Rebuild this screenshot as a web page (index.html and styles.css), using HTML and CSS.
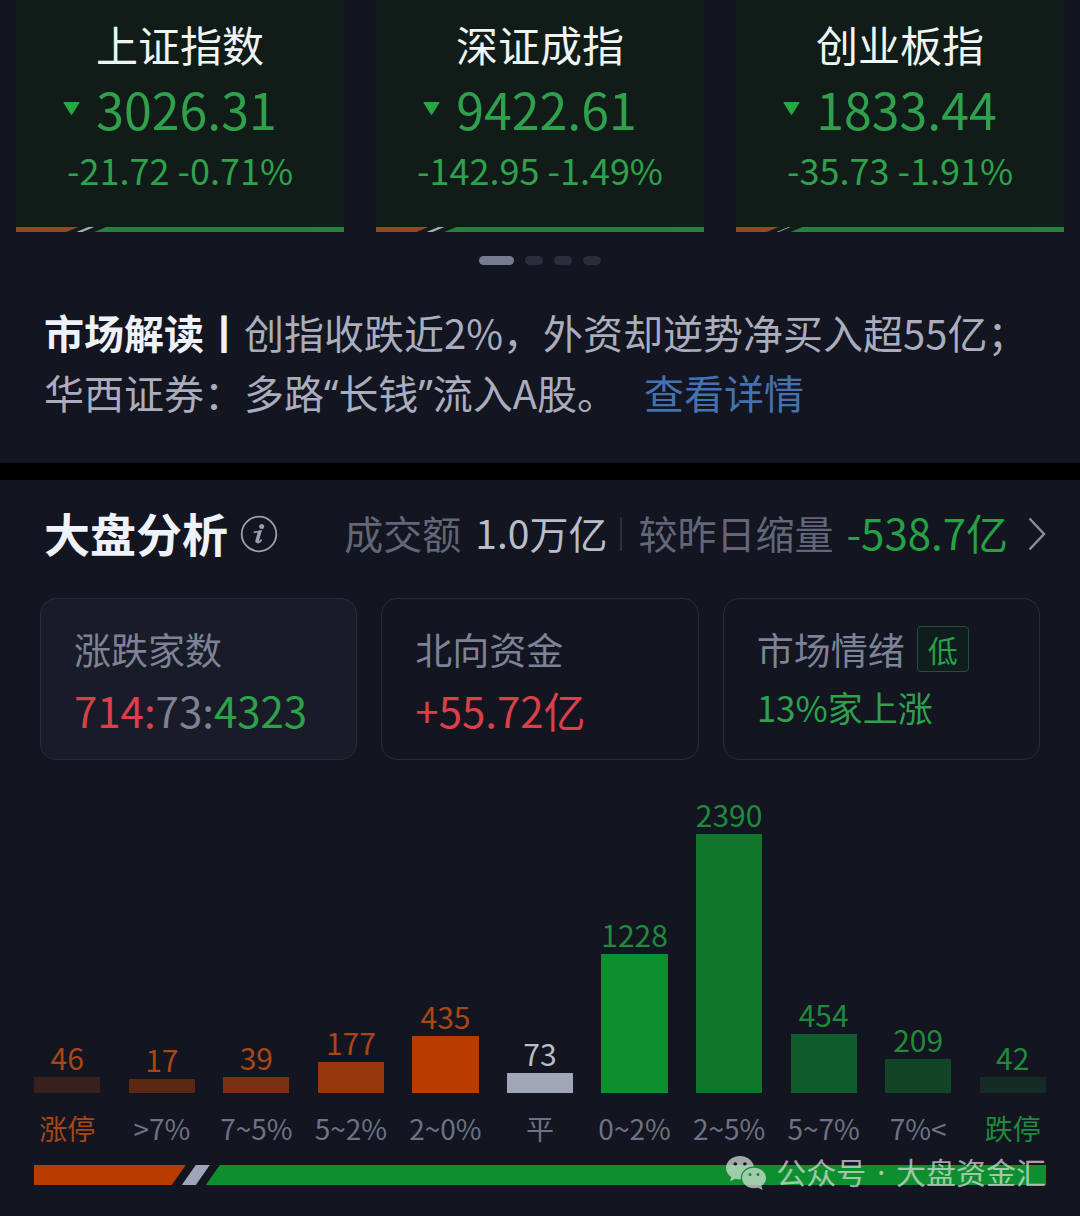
FILE: index.html
```html
<!DOCTYPE html>
<html lang="zh-CN">
<head>
<meta charset="utf-8">
<meta name="viewport" content="width=device-width, initial-scale=1">
<title>大盘分析</title>
<link rel="stylesheet" href="styles.css">
</head>
<body>
<main class="page">
  <section class="overview">
    <div class="indices">
      <article class="index">
        <h2 class="index-name">上证指数</h2>
        <p class="index-value"><svg class="down" viewBox="0 0 17 13" aria-hidden="true"><path d="M1 0h15q1 0 .4 1L9.500 12q-1 1.500-2 0L.6 1Q0 0 1 0z"/></svg>3026.31</p>
        <p class="index-delta">-21.72 -0.71%</p>
        <div class="split split-thin"><span class="seg up" style="width:19%"></span><span class="seg flat"></span><span class="seg fall"></span></div>
      </article>
      <article class="index">
        <h2 class="index-name">深证成指</h2>
        <p class="index-value"><svg class="down" viewBox="0 0 17 13" aria-hidden="true"><path d="M1 0h15q1 0 .4 1L9.500 12q-1 1.500-2 0L.6 1Q0 0 1 0z"/></svg>9422.61</p>
        <p class="index-delta">-142.95 -1.49%</p>
        <div class="split split-thin"><span class="seg up" style="width:16%"></span><span class="seg flat"></span><span class="seg fall"></span></div>
      </article>
      <article class="index">
        <h2 class="index-name">创业板指</h2>
        <p class="index-value"><svg class="down" viewBox="0 0 17 13" aria-hidden="true"><path d="M1 0h15q1 0 .4 1L9.500 12q-1 1.500-2 0L.6 1Q0 0 1 0z"/></svg>1833.44</p>
        <p class="index-delta">-35.73 -1.91%</p>
        <div class="split split-thin"><span class="seg up" style="width:13%"></span><span class="seg flat hairline"></span><span class="seg fall"></span></div>
      </article>
    </div>
    <div class="pager">
      <button class="dot dot-on" type="button" aria-label="第1页"></button>
      <button class="dot" type="button" aria-label="第2页"></button>
      <button class="dot" type="button" aria-label="第3页"></button>
      <button class="dot" type="button" aria-label="第4页"></button>
    </div>
    <p class="news"><strong>市场解读丨</strong>创指收跌近2%，外资却逆势净买入超55亿；华西证券：多路<span class="quote">“</span>长钱<span class="quote">”</span>流入A股。<a class="more" href="#detail">查看详情</a></p>
  </section>

  <section class="analysis" id="detail">
    <header class="head">
      <h1 class="title">大盘分析</h1>
      <button class="info" type="button" aria-label="说明">
        <svg viewBox="0 0 38 38" aria-hidden="true"><circle cx="19" cy="19" r="17.300" fill="none" stroke="currentColor" stroke-width="1.800"/><circle cx="21.700" cy="11.400" r="2.500" fill="currentColor"/><path d="M14.500 17.200q3.500-.4 6.300-1.200l-2.900 10.200q-.4 1.600.6 1.300 1.200-.4 2.600-2.200" fill="none" stroke="currentColor" stroke-width="1.800" stroke-linecap="round"/><path d="M19.300 17l-2.700 9.500" stroke="currentColor" stroke-width="2.800" stroke-linecap="round"/></svg>
      </button>
      <a class="turnover" href="#turnover">
        <span class="muted">成交额</span>
        <span class="amount">1.0万亿</span>
        <span class="rule"></span>
        <span class="muted">较昨日缩量</span>
        <span class="shrink">-538.7亿</span>
        <svg class="chevron" viewBox="0 0 18 34" aria-hidden="true"><path d="M1.500 1.500L16 17 1.500 32.500" fill="none" stroke="currentColor" stroke-width="2.400"/></svg>
      </a>
    </header>

    <div class="tiles">
      <button class="tile tile-on" type="button">
        <span class="tile-label">涨跌家数</span>
        <span class="tile-value"><span class="red">714:</span><span class="gray">73:</span><span class="green">4323</span></span>
      </button>
      <button class="tile" type="button">
        <span class="tile-label">北向资金</span>
        <span class="tile-value red">+55.72亿</span>
      </button>
      <button class="tile" type="button">
        <span class="tile-label">市场情绪<span class="tag">低</span></span>
        <span class="tile-value tile-text green">13%家上涨</span>
      </button>
    </div>

    <div class="chart">
      <div class="col c-up"><span class="num">46</span><span class="bar u5" style="height:16px"></span><span class="cat">涨停</span></div>
      <div class="col c-up plain"><span class="num">17</span><span class="bar u4" style="height:14px"></span><span class="cat">&gt;7%</span></div>
      <div class="col c-up plain"><span class="num">39</span><span class="bar u3" style="height:16px"></span><span class="cat">7~5%</span></div>
      <div class="col c-up plain"><span class="num">177</span><span class="bar u2" style="height:31px"></span><span class="cat">5~2%</span></div>
      <div class="col c-up plain"><span class="num">435</span><span class="bar u1" style="height:57px"></span><span class="cat">2~0%</span></div>
      <div class="col c-flat plain"><span class="num">73</span><span class="bar f" style="height:20px"></span><span class="cat">平</span></div>
      <div class="col c-down plain"><span class="num">1228</span><span class="bar d1" style="height:139px"></span><span class="cat">0~2%</span></div>
      <div class="col c-down plain"><span class="num">2390</span><span class="bar d2" style="height:259px"></span><span class="cat">2~5%</span></div>
      <div class="col c-down plain"><span class="num">454</span><span class="bar d3" style="height:59px"></span><span class="cat">5~7%</span></div>
      <div class="col c-down plain"><span class="num">209</span><span class="bar d4" style="height:34px"></span><span class="cat">7%&lt;</span></div>
      <div class="col c-down"><span class="num">42</span><span class="bar d5" style="height:16px"></span><span class="cat">跌停</span></div>
    </div>

    <div class="footer">
      <div class="split split-thick"><span class="seg up" style="width:15%"></span><span class="seg flat"></span><span class="seg fall"></span></div>
      <div class="watermark">
        <svg viewBox="0 0 40 34" aria-hidden="true"><path fill="currentColor" fill-rule="evenodd" d="M14 0C6.200 0 0 5.200 0 11.800c0 3.800 2.100 7.100 5.400 9.200L4 25.500l5.200-2.700c1.600.5 3.200.7 4.900.7h.8C14 15.800 20.300 10.200 28 10.400 26.800 4.400 20.900 0 14 0zM9.300 6.200a1.800 1.800 0 1 1 0 3.600 1.800 1.800 0 0 1 0-3.600zm9.600 0a1.800 1.800 0 1 1 0 3.600 1.800 1.800 0 0 1 0-3.600z"/><path fill="currentColor" fill-rule="evenodd" d="M28 11.800c-6.700 0-12 4.500-12 10.200s5.300 10.200 12 10.200c1.400 0 2.700-.2 4-.5l4.600 2.300-1.200-4c2.800-1.900 4.600-4.800 4.600-8 0-5.700-5.400-10.200-12-10.200zm-4 5.100a1.500 1.500 0 1 1 0 3 1.500 1.500 0 0 1 0-3zm8 0a1.500 1.500 0 1 1 0 3 1.500 1.500 0 0 1 0-3z"/></svg>
        <span class="account">公众号 <span class="sep">·</span> 大盘资金汇</span>
      </div>
    </div>
  </section>
</main>
</body>
</html>
```
FILE: styles.css
```css
* { box-sizing: border-box; }

body {
  margin: 0;
  background: #131520;
  color: #a9adbd;
  font-family: "Noto Sans CJK SC", "Noto Sans", sans-serif;
}

h1, h2, p { margin: 0; }

button {
  padding: 0;
  border: 0;
  background: none;
  color: inherit;
  font: inherit;
  text-align: left;
}

a { text-decoration: none; }

.red { color: #d9404a; }
.gray { color: #7d8296; }
.green { color: #2da24a; }

/* Index cards */
.indices {
  display: grid;
  grid-template-columns: repeat(3, 1fr);
  gap: 32px;
  padding: 0 16px;
}

.index {
  padding-top: 14px;
  background: linear-gradient(90deg, #0f1d18, #111c19 12%, #111c19 88%, #0f1d18);
  color: #2fa14d;
  text-align: center;
}

.index-name {
  color: #eef5f3;
  font-size: 42px;
  font-weight: 400;
  line-height: 60px;
}

.index-value {
  display: flex;
  justify-content: center;
  align-items: center;
  gap: 16px;
  padding-right: 20px;
  font-size: 50px;
  line-height: 68px;
}

.down { width: 17px; height: 13px; fill: #25a83f; }

.index-delta {
  padding-bottom: 31px;
  font-size: 36px;
  line-height: 54px;
}

/* Slanted rise / flat / fall ratio strip */
.split { display: flex; }
.seg { display: block; flex: none; }
.seg.fall { flex: 1; }

.split-thin { height: 5px; }
.split-thin .up { background: #9a4522; clip-path: polygon(0 0, 100% 0, calc(100% - 12px) 100%, 0 100%); }
.split-thin .flat { width: 18px; margin-left: -2px; background: #a9adb5; clip-path: polygon(12px 0, 100% 0, calc(100% - 12px) 100%, 0 100%); }
.split-thin .hairline { width: 14px; }
.split-thin .fall { background: #28803f; clip-path: polygon(12px 0, 100% 0, 100% 100%, 0 100%); }

.split-thick { height: 20px; }
.split-thick .up { background: #b83b00; clip-path: polygon(0 0, 100% 0, calc(100% - 14px) 100%, 0 100%); }
.split-thick .flat { width: 28px; margin-left: -4px; background: #a0a5b8; clip-path: polygon(14px 0, 100% 0, calc(100% - 14px) 100%, 0 100%); }
.split-thick .fall { margin-left: -4px; background: #0d8f2f; clip-path: polygon(14px 0, 100% 0, 100% 100%, 0 100%); }

.pager {
  display: flex;
  justify-content: center;
  gap: 11px;
  padding: 24px 0;
}

.dot { width: 18px; height: 9px; border-radius: 5px; background: #2a2d3b; }
.dot-on { width: 35px; background: #767b8f; }

.news {
  padding: 13px 36px 39px 44px;
  font-size: 40px;
  line-height: 60px;
}

.news strong { color: #f0f2fa; font-weight: 700; }
.quote { font-family: "Noto Sans", sans-serif; }
.more { margin-left: 27px; color: #4472b0; }

/* Market analysis */
.analysis { border-top: 17px solid #000; }

.head {
  display: flex;
  align-items: center;
  padding: 22px 34px 0 44px;
}

.title {
  padding-bottom: 4px;
  color: #f0f2fa;
  font-size: 46px;
  font-weight: 700;
  line-height: 60px;
}

.info { display: flex; margin-left: 12px; color: #9a9eae; }
.info svg { width: 38px; height: 38px; }

.turnover {
  display: flex;
  align-items: center;
  margin-left: auto;
  font-size: 39px;
  line-height: 60px;
  white-space: nowrap;
}

.muted, .amount, .shrink { padding-bottom: 4px; }
.muted { color: #626778; }
.amount { margin-left: 14px; color: #b9bdcb; }
.rule { width: 2px; height: 34px; margin: 0 16px 0 13px; background: #2b2e3b; }
.shrink { margin-left: 13px; color: #25a244; font-size: 42px; }
.chevron { width: 18px; height: 34px; margin-left: 20px; color: #8a8fa0; }

.tiles {
  display: grid;
  grid-template-columns: repeat(3, 1fr);
  gap: 24px;
  padding: 32px 40px 0;
}

.tile {
  display: flex;
  flex-direction: column;
  padding: 22px 33px 16px;
  border: 1px solid #292c38;
  border-radius: 16px;
}

.tile-on { background: #191c28; }

.tile-label {
  display: flex;
  align-items: center;
  gap: 12px;
  color: #7d8296;
  font-size: 37px;
  line-height: 56px;
}

.tag {
  padding: 0 10px;
  border: 1px solid #24503a;
  border-radius: 4px;
  background: #101d1f;
  color: #25a244;
  font-size: 30px;
  line-height: 44px;
}

.tile-value { font-size: 42px; line-height: 66px; }
.tile-text { font-size: 35px; line-height: 60px; }

/* Distribution chart */
.chart {
  display: flex;
  align-items: flex-end;
  padding: 34px 20px 0;
}

.col {
  display: flex;
  flex: 1 1 0;
  flex-direction: column;
  align-items: center;
  min-width: 0;
  white-space: nowrap;
}

.num { font-size: 30px; line-height: 40px; }
.bar { width: 70%; }
.cat { margin-top: 14px; font-size: 28px; line-height: 42px; }

.c-up { color: #a84616; }
.c-flat { color: #b9bdcb; }
.c-down { color: #1f8a3c; }
.plain .cat { color: #6d7284; }

.u5 { background: #38201c; }
.u4 { background: #5c2812; }
.u3 { background: #7a3010; }
.u2 { background: #97370c; }
.u1 { background: #b83b00; }
.f { background: #a0a5b8; }
.d1 { background: #0d8f2f; }
.d2 { background: #10762c; }
.d3 { background: #115c2c; }
.d4 { background: #134426; }
.d5 { background: #152c26; }

.footer {
  position: relative;
  padding: 16px 34px 31px;
}

.watermark {
  position: absolute;
  top: 2px;
  right: 34px;
  display: flex;
  align-items: center;
  gap: 10px;
  color: rgba(225, 230, 225, 0.7);
  font-size: 30px;
  line-height: 44px;
}

.watermark svg { width: 40px; height: 34px; }
.account { font-family: "Noto Sans", "Noto Sans CJK SC", sans-serif; }
.sep { margin: 0 3px; }
```
